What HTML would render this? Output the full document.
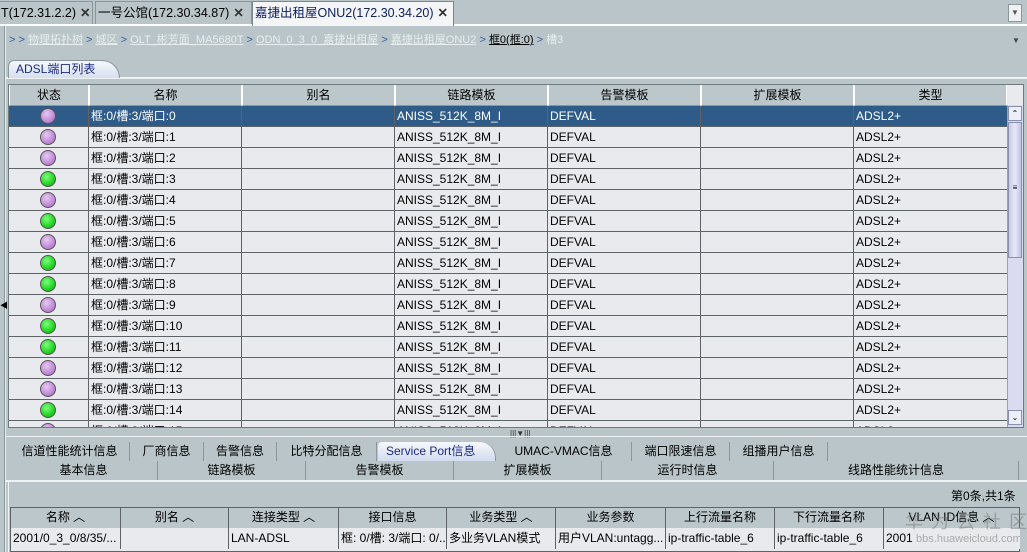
<!DOCTYPE html>
<html><head><meta charset="utf-8"><style>
*{margin:0;padding:0;box-sizing:border-box}
body{width:1027px;height:552px;overflow:hidden;background:#b9c5c8;font-family:"Liberation Sans","Noto Sans CJK SC",sans-serif;font-size:12px;color:#000;position:relative}
.a{position:absolute;white-space:nowrap}
.tab{position:absolute;top:1px;height:23px;line-height:22px;font-size:12.5px;border:1px solid #8a979b;border-bottom:none;background:#b9c5c8;padding-left:2px;white-space:nowrap;overflow:hidden}
.x{font-weight:bold;margin-left:4px;color:#333}
.tbl{position:absolute;left:8px;top:84px;width:1016px;height:344px;background:#e9eaee;border:1px solid #6f7a7e;overflow:hidden}
.hd{position:absolute;top:0;height:21px;line-height:20px;text-align:center;background:#bcc7cb;border-right:1px solid #fff;border-left:1px solid #fff;border-bottom:1px solid #8a9599;font-size:12px}
.row{position:absolute;left:0;width:998px;height:21px;border-bottom:1px solid #5d6366;line-height:20px}
.c{position:absolute;top:0;height:20px;border-right:1px solid #5d6366;padding-left:2px;overflow:hidden;white-space:nowrap}
.dot{position:absolute;left:31px;top:2px;width:16px;height:16px;border-radius:50%;border:1px solid #555}
.p{background:radial-gradient(circle at 40% 35%,#e6c8f0,#c08ad8 60%,#9a68b0)}
.g{background:radial-gradient(circle at 40% 35%,#7dff7d,#22d422 60%,#15a015)}
.sel{background:#2e5b88;color:#fff}
.btab{position:absolute;height:19px;line-height:18px;text-align:center;font-size:12px;border-right:1px solid #8a979b;background:#b9c5c8;white-space:nowrap}
.th{position:absolute;top:0;height:20px;line-height:19px;text-align:center;background:#bcc7cb;border-right:1px solid #5d6366;white-space:nowrap}
.td{position:absolute;top:20px;height:21px;line-height:20px;border-right:1px solid #5d6366;padding-left:2px;overflow:hidden;background:#e9eaee;white-space:nowrap}
</style></head><body>
<div class="a" style="left:0;top:24px;width:1027px;height:2px;background:#fff"></div>
<div class="tab" style="left:-2px;width:95px">T(172.31.2.2)<span class="x">✕</span></div>
<div class="tab" style="left:95px;width:157px">一号公馆(172.30.34.87)<span class="x">✕</span></div>
<div class="tab" style="left:252px;width:202px;background:#f4f5f6;height:25px;border-color:#7b878b;color:#102060">嘉捷出租屋ONU2(172.30.34.20)<span class="x" style="color:#333">✕</span></div>
<div class="a" style="left:1008px;top:4px;width:14px;height:18px;background:#eef0f2;border:1px solid #8a979b;font-size:8px;line-height:16px;text-align:center;color:#555">▼</div>
<div class="a" style="left:4px;top:26px;width:1px;height:526px;background:#8a979b"></div>
<div class="a" style="left:5px;top:26px;width:1px;height:526px;background:#e8eced"></div>
<div class="a" style="left:0;top:300px;font-size:8px">◀</div>
<div class="a" style="left:9px;top:31px;font-size:11px;color:#e8eef0"><span style="color:#3a5aa0">&gt; &gt;</span> <u>物理拓扑树</u> <span style="color:#3a5aa0">&gt;</span> <u>城区</u> <span style="color:#3a5aa0">&gt;</span> <u>OLT_彬芳面_MA5680T</u> <span style="color:#3a5aa0">&gt;</span> <u>ODN_0_3_0_嘉捷出租屋</u> <span style="color:#3a5aa0">&gt;</span> <u>嘉捷出租屋ONU2</u> <span style="color:#3a5aa0">&gt;</span> <u style="color:#000">框0(框:0)</u> <span style="color:#3a5aa0">&gt;</span> 槽3</div>
<div class="a" style="left:1012px;top:36px;font-size:8px;color:#444">▼</div>
<div class="a" style="left:6px;top:77px;width:1021px;height:2px;background:#eef2f3"></div>
<div class="a" style="left:8px;top:60px;width:112px;height:18px;background:linear-gradient(#f6f8fb,#d6dff0);border:1px solid #8a979b;border-bottom:none;border-radius:6px 18px 0 0;padding-left:7px;line-height:17px;color:#1a2a80">ADSL端口列表</div>
<div class="tbl">
<div class="hd" style="left:0;width:80px">状态</div>
<div class="hd" style="left:80px;width:153px">名称</div>
<div class="hd" style="left:233px;width:153px">别名</div>
<div class="hd" style="left:386px;width:153px">链路模板</div>
<div class="hd" style="left:539px;width:153px">告警模板</div>
<div class="hd" style="left:692px;width:153px">扩展模板</div>
<div class="hd" style="left:845px;width:153px">类型</div>
<div id="rows"></div>
<div class="a" style="left:998px;top:20px;width:16px;height:322px;background:#dadbf0;border-left:1px solid #9a9cc0"></div>
<div class="a" style="left:999px;top:21px;width:14px;height:15px;background:#eceef8;border:1px solid #8890b0;font-size:8px;text-align:center;line-height:13px">⌃</div>
<div class="a" style="left:999px;top:37px;width:14px;height:136px;background:linear-gradient(90deg,#c8cae8,#e8e9f8,#c0c2e0);border:1px solid #8890b0;font-size:8px;text-align:center;line-height:130px">≡</div>
<div class="a" style="left:999px;top:325px;width:14px;height:15px;background:#eceef8;border:1px solid #8890b0;font-size:8px;text-align:center;line-height:13px">⌄</div>
</div>
<div class="a" style="left:510px;top:429px;font-size:8px;color:#333">|||▼|||</div>
<div class="a" style="left:6px;top:436px;width:1021px;height:1px;background:#eef2f3"></div>
<div class="btab" style="left:10px;top:442px;width:120px">信道性能统计信息</div>
<div class="btab" style="left:130px;top:442px;width:74px">厂商信息</div>
<div class="btab" style="left:204px;top:442px;width:73px">告警信息</div>
<div class="btab" style="left:277px;top:442px;width:100px">比特分配信息</div>
<div class="btab" style="left:378px;top:442px;width:118px;background:linear-gradient(#f6f8fb,#d2dcf0);border-radius:4px 16px 0 0;color:#1a2a80;text-align:left;padding-left:8px">Service Port信息</div>
<div class="btab" style="left:496px;top:442px;width:136px">UMAC-VMAC信息</div>
<div class="btab" style="left:632px;top:442px;width:98px">端口限速信息</div>
<div class="btab" style="left:730px;top:442px;width:98px">组播用户信息</div>
<div class="btab" style="left:10px;top:461px;width:148px">基本信息</div>
<div class="btab" style="left:158px;top:461px;width:148px">链路模板</div>
<div class="btab" style="left:306px;top:461px;width:148px">告警模板</div>
<div class="btab" style="left:454px;top:461px;width:148px">扩展模板</div>
<div class="btab" style="left:602px;top:461px;width:172px">运行时信息</div>
<div class="btab" style="left:774px;top:461px;width:245px">线路性能统计信息</div>
<div class="a" style="left:6px;top:480px;width:1021px;height:2px;background:#eef2f3"></div>
<div class="a" style="left:8px;top:482px;width:1px;height:70px;background:#eef2f3"></div>
<div class="a" style="left:951px;top:487px">第0条,共1条</div>
<div class="a" style="left:10px;top:507px;width:1010px;height:45px;border:1px solid #5d6366;background:#e9eaee">
<div class="th" style="left:0;width:110px">名称 ︿</div>
<div class="th" style="left:110px;width:108px">别名 ︿</div>
<div class="th" style="left:218px;width:110px">连接类型 ︿</div>
<div class="th" style="left:328px;width:108px">接口信息</div>
<div class="th" style="left:436px;width:109px">业务类型 ︿</div>
<div class="th" style="left:545px;width:110px">业务参数</div>
<div class="th" style="left:655px;width:109px">上行流量名称</div>
<div class="th" style="left:764px;width:109px">下行流量名称</div>
<div class="th" style="left:873px;width:136px">VLAN ID信息 ︿</div>
<div class="td" style="left:0;width:110px">2001/0_3_0/8/35/...</div>
<div class="td" style="left:110px;width:108px"></div>
<div class="td" style="left:218px;width:110px">LAN-ADSL</div>
<div class="td" style="left:328px;width:108px">框: 0/槽: 3/端口: 0/...</div>
<div class="td" style="left:436px;width:109px">多业务VLAN模式</div>
<div class="td" style="left:545px;width:110px">用户VLAN:untagg...</div>
<div class="td" style="left:655px;width:109px">ip-traffic-table_6</div>
<div class="td" style="left:764px;width:109px">ip-traffic-table_6</div>
<div class="td" style="left:873px;width:136px;border-right:none">2001 <span style="color:#aaa;font-size:11px">bbs.huaweicloud.com</span></div>
</div>
<div class="a" style="left:905px;top:508px;font-size:18px;color:rgba(120,120,120,.5);letter-spacing:8px">华为云社区</div>
<script>
var pat="pppgpgpggpggppgp";var h="";
for(var i=0;i<16;i++){var t=21+i*21;var s=i==0?" sel":"";
h+='<div class="row'+s+'" style="top:'+t+'px"><div class="c" style="left:0;width:80px"><div class="dot '+pat[i]+'"></div></div>'+
'<div class="c" style="left:80px;width:153px">框:0/槽:3/端口:'+i+'</div><div class="c" style="left:233px;width:153px"></div>'+
'<div class="c" style="left:386px;width:153px">ANISS_512K_8M_I</div><div class="c" style="left:539px;width:153px">DEFVAL</div>'+
'<div class="c" style="left:692px;width:153px"></div><div class="c" style="left:845px;width:153px;border-right:none">ADSL2+</div></div>';}
document.getElementById("rows").innerHTML=h;
</script>
</body></html>
